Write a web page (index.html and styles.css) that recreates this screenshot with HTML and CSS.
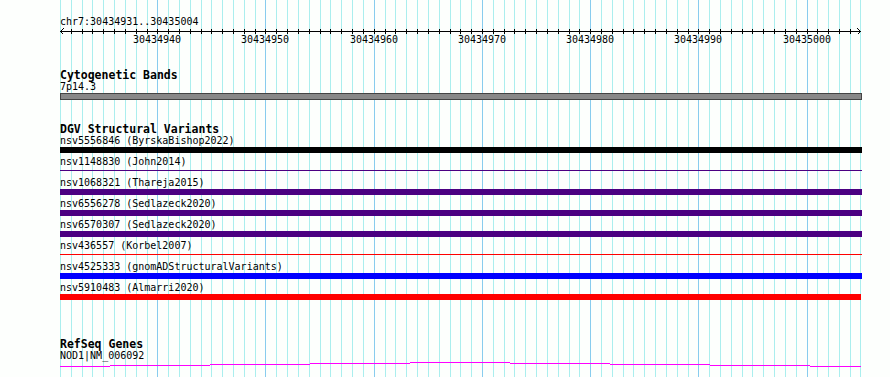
FILE: index.html
```html
<!DOCTYPE html>
<html lang="en">
<head>
  <meta charset="UTF-8">
  <meta name="viewport" content="width=device-width, initial-scale=1.0">
  <title>chr7:30434931..30435004</title>
  <link rel="stylesheet" href="styles.css">
</head>
<body>

<div class="view">
  <!-- base guide lines, one per bp, darker every 10 bp -->
  <svg class="grid" width="890" height="377" viewBox="0 0 890 377">
    <path class="minor" d="M60.5 0V377M71.5 0V377M82.5 0V377M92.5 0V377M103.5 0V377M114.5 0V377M125.5 0V377M136.5 0V377M147.5 0V377M168.5 0V377M179.5 0V377M190.5 0V377M201.5 0V377M211.5 0V377M222.5 0V377M233.5 0V377M244.5 0V377M255.5 0V377M276.5 0V377M287.5 0V377M298.5 0V377M309.5 0V377M320.5 0V377M330.5 0V377M341.5 0V377M352.5 0V377M363.5 0V377M385.5 0V377M395.5 0V377M406.5 0V377M417.5 0V377M428.5 0V377M439.5 0V377M450.5 0V377M460.5 0V377M471.5 0V377M493.5 0V377M504.5 0V377M514.5 0V377M525.5 0V377M536.5 0V377M547.5 0V377M558.5 0V377M569.5 0V377M579.5 0V377M601.5 0V377M612.5 0V377M623.5 0V377M633.5 0V377M644.5 0V377M655.5 0V377M666.5 0V377M677.5 0V377M688.5 0V377M709.5 0V377M720.5 0V377M731.5 0V377M742.5 0V377M752.5 0V377M763.5 0V377M774.5 0V377M785.5 0V377M796.5 0V377M817.5 0V377M828.5 0V377M839.5 0V377M850.5 0V377M860.5 0V377"/>
    <path class="major" d="M157.5 0V377M265.5 0V377M374.5 0V377M482.5 0V377M590.5 0V377M698.5 0V377M807.5 0V377"/>
  </svg>

  <div class="tracks">
    <div class="locus">chr7:30434931..30435004</div>

    <svg class="ruler" width="802" height="18" viewBox="60 28 802 18">
      <path class="axis" d="M60 31.5H861M63.5 28.5L60.5 31.5L63.5 34.5M857.5 28.5L860.5 31.5L857.5 34.5"/>
      <path class="ticks" d="M71.5 29V34M82.5 29V34M92.5 29V34M103.5 29V34M114.5 29V34M125.5 29V34M136.5 29V34M147.5 29V34M157.5 29V34M168.5 29V34M179.5 29V34M190.5 29V34M201.5 29V34M211.5 29V34M222.5 29V34M233.5 29V34M244.5 29V34M255.5 29V34M265.5 29V34M276.5 29V34M287.5 29V34M298.5 29V34M309.5 29V34M320.5 29V34M330.5 29V34M341.5 29V34M352.5 29V34M363.5 29V34M374.5 29V34M385.5 29V34M395.5 29V34M406.5 29V34M417.5 29V34M428.5 29V34M439.5 29V34M450.5 29V34M460.5 29V34M471.5 29V34M482.5 29V34M493.5 29V34M504.5 29V34M514.5 29V34M525.5 29V34M536.5 29V34M547.5 29V34M558.5 29V34M569.5 29V34M579.5 29V34M590.5 29V34M601.5 29V34M612.5 29V34M623.5 29V34M633.5 29V34M644.5 29V34M655.5 29V34M666.5 29V34M677.5 29V34M688.5 29V34M698.5 29V34M709.5 29V34M720.5 29V34M731.5 29V34M742.5 29V34M752.5 29V34M763.5 29V34M774.5 29V34M785.5 29V34M796.5 29V34M807.5 29V34M817.5 29V34M828.5 29V34M839.5 29V34M850.5 29V34"/>
      <text x="157" y="43">30434940</text>
      <text x="265" y="43">30434950</text>
      <text x="374" y="43">30434960</text>
      <text x="482" y="43">30434970</text>
      <text x="590" y="43">30434980</text>
      <text x="698" y="43">30434990</text>
      <text x="807" y="43">30435000</text>
    </svg>

    <section class="track">
      <h2 class="track-title">Cytogenetic Bands</h2>
      <div class="feature-label">7p14.3</div>
      <div class="band"></div>
    </section>

    <section class="track">
      <h2 class="track-title">DGV Structural Variants</h2>
      <div class="variants">
        <div class="feature">
          <div class="feature-label">nsv5556846 (ByrskaBishop2022)</div>
          <div class="bar black"></div>
        </div>
        <div class="feature">
          <div class="feature-label">nsv1148830 (John2014)</div>
          <div class="bar thin indigo"></div>
        </div>
        <div class="feature">
          <div class="feature-label">nsv1068321 (Thareja2015)</div>
          <div class="bar indigo"></div>
        </div>
        <div class="feature">
          <div class="feature-label">nsv6556278 (Sedlazeck2020)</div>
          <div class="bar indigo"></div>
        </div>
        <div class="feature">
          <div class="feature-label">nsv6570307 (Sedlazeck2020)</div>
          <div class="bar indigo"></div>
        </div>
        <div class="feature">
          <div class="feature-label">nsv436557 (Korbel2007)</div>
          <div class="bar thin red"></div>
        </div>
        <div class="feature">
          <div class="feature-label">nsv4525333 (gnomADStructuralVariants)</div>
          <div class="bar blue"></div>
        </div>
        <div class="feature">
          <div class="feature-label">nsv5910483 (Almarri2020)</div>
          <div class="bar red short"></div>
        </div>
      </div>
    </section>

    <section class="track genes">
      <h2 class="track-title">RefSeq Genes</h2>
      <div class="feature-label">NOD1|NM_006092</div>
      <svg class="gene-model" width="802" height="6" viewBox="60 362 802 6">
        <rect x="60" y="366" width="50" height="1"/>
        <rect x="110" y="365" width="100" height="1"/>
        <rect x="210" y="364" width="100" height="1"/>
        <rect x="310" y="363" width="100" height="1"/>
        <rect x="410" y="362" width="100" height="1"/>
        <rect x="510" y="363" width="100" height="1"/>
        <rect x="610" y="364" width="100" height="1"/>
        <rect x="710" y="365" width="100" height="1"/>
        <rect x="810" y="366" width="51" height="1"/>
      </svg>
    </section>
  </div>
</div>

</body>
</html>
```

FILE: styles.css
```css
* {
  margin: 0;
  padding: 0;
  box-sizing: border-box;
}

body {
  background: #fdfffd;
  color: #000;
  font-family: "DejaVu Sans Mono", "Liberation Mono", monospace;
}

.view {
  position: relative;
  width: 890px;
  height: 377px;
  overflow: hidden;
}

/* guide lines sit behind every track */
.grid {
  position: absolute;
  top: 0;
  left: 0;
}

.grid path {
  fill: none;
  stroke-width: 1;
  shape-rendering: crispEdges;
}

.grid .minor {
  stroke: #aaeeee;
}

.grid .major {
  stroke: #88ccee;
}

.tracks {
  position: relative;
  padding: 16px 0 0 60px;
}

.locus,
.feature-label {
  font-size: 10px;
  line-height: 12px;
  height: 12px;
  white-space: nowrap;
}

.ruler {
  display: block;
}

.ruler path {
  fill: none;
  stroke: #000;
  stroke-width: 1;
  shape-rendering: crispEdges;
}

.ruler text {
  font-family: "DejaVu Sans Mono", "Liberation Mono", monospace;
  font-size: 10px;
  text-anchor: middle;
  fill: #000;
}

.track {
  margin-top: 23px;
}

.track-title {
  font-size: 11.5px;
  font-weight: bold;
  line-height: 12px;
  height: 12px;
  white-space: nowrap;
}

.band {
  width: 802px;
  height: 7px;
  background: #888;
  border: 1px solid #444;
}

.variants {
  display: flex;
  flex-direction: column;
  gap: 3px;
}

.bar {
  width: 802px;
  height: 6px;
}

.bar.thin {
  height: 1px;
  margin: 2px 0 3px;
}

.bar.short {
  width: 801px;
}

.black {
  background: #000;
}

.indigo {
  background: #4b0082;
}

.red {
  background: #ff0000;
}

.blue {
  background: #0000ff;
}

.genes {
  margin-top: 38px;
}

.gene-model {
  display: block;
}

.gene-model rect {
  fill: #ff00ff;
  shape-rendering: crispEdges;
}
```
